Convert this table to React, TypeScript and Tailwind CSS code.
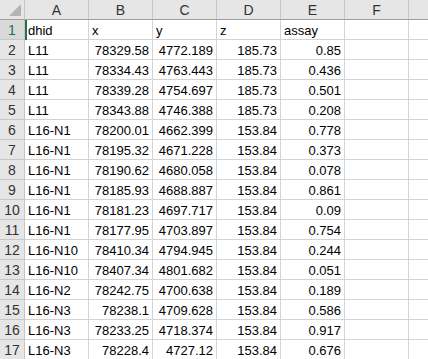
import React from "react";

const cols = ["A", "B", "C", "D", "E", "F"];

const rows: string[][] = [
  ["dhid", "x", "y", "z", "assay"],
  ["L11", "78329.58", "4772.189", "185.73", "0.85"],
  ["L11", "78334.43", "4763.443", "185.73", "0.436"],
  ["L11", "78339.28", "4754.697", "185.73", "0.501"],
  ["L11", "78343.88", "4746.388", "185.73", "0.208"],
  ["L16-N1", "78200.01", "4662.399", "153.84", "0.778"],
  ["L16-N1", "78195.32", "4671.228", "153.84", "0.373"],
  ["L16-N1", "78190.62", "4680.058", "153.84", "0.078"],
  ["L16-N1", "78185.93", "4688.887", "153.84", "0.861"],
  ["L16-N1", "78181.23", "4697.717", "153.84", "0.09"],
  ["L16-N1", "78177.95", "4703.897", "153.84", "0.754"],
  ["L16-N10", "78410.34", "4794.945", "153.84", "0.244"],
  ["L16-N10", "78407.34", "4801.682", "153.84", "0.051"],
  ["L16-N2", "78242.75", "4700.638", "153.84", "0.189"],
  ["L16-N3", "78238.1", "4709.628", "153.84", "0.586"],
  ["L16-N3", "78233.25", "4718.374", "153.84", "0.917"],
  ["L16-N3", "78228.4", "4727.12", "153.84", "0.676"],
];

export default function App() {
  return (
    <div
      className="w-[428px] h-[359px] overflow-hidden bg-white text-[13px] text-black"
      style={{ fontFamily: '"Liberation Sans", Arial, sans-serif' }}
    >
      {/* column headers */}
      <div className="flex h-[20px] bg-[#e6e6e6] border-b border-[#9f9f9f]">
        <div className="relative w-[25px] shrink-0 border-r border-[#c6c6c6]">
          <svg className="absolute right-[3px] bottom-[3px]" width="12" height="12" viewBox="0 0 12 12">
            <polygon points="12,0 12,12 0,12" fill="#b4b4b4" />
          </svg>
        </div>
        {cols.map((c) => (
          <div
            key={c}
            className="w-[64px] shrink-0 border-r border-[#c6c6c6] flex items-center justify-center text-[#333] text-[14px] leading-none"
          >
            {c}
          </div>
        ))}
        <div className="flex-1" />
      </div>

      {rows.map((r, i) => (
        <div key={i} className="flex h-[20px]">
          <div
            className={`w-[25px] shrink-0 border-r border-b border-[#c6c6c6] flex items-center justify-center text-[14px] leading-none ${
              i === 0 ? "bg-[#d9d9d9] text-[#217346]" : "bg-[#e6e6e6] text-[#333]"
            }`}
          >
            {i + 1}
          </div>
          {cols.map((c, j) => {
            const v = r[j] ?? "";
            const numeric = i > 0 && j > 0;
            return (
              <div
                key={c}
                className={`relative w-[64px] shrink-0 border-r border-b border-[#d4d4d4] flex items-end pb-[2px] px-[3px] leading-none whitespace-nowrap ${
                  numeric ? "justify-end" : "justify-start"
                }`}
              >
                {i === 0 && j === 0 && (
                  <div className="absolute left-0 top-0 bottom-[-1px] w-[2px] bg-[#217346]" />
                )}
                {v}
              </div>
            );
          })}
          <div className="flex-1 border-b border-[#d4d4d4]" />
        </div>
      ))}
    </div>
  );
}
